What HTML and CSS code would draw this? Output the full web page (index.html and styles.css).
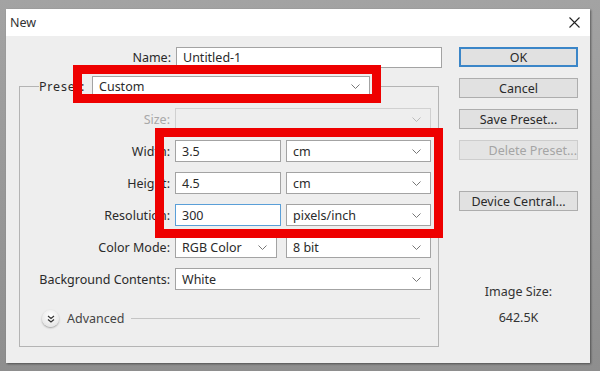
FILE: index.html
```html
<!DOCTYPE html>
<html lang="en">
<head>
  <meta charset="utf-8">
  <title>New</title>
  <link rel="stylesheet" href="styles.css">
</head>
<body>

  <div class="dialog">
    <div class="titlebar">
      <span>New</span>
      <svg class="close" width="11" height="11" viewBox="0 0 11 11"><path d="M0.5 0.5 L10.5 10.5 M10.5 0.5 L0.5 10.5" stroke="#222" stroke-width="1.1" fill="none"/></svg>
    </div>

    <div class="content">
      <div class="main">
        <div class="name-row">
          <label>Name:</label>
          <div class="field name-field">Untitled-1</div>
        </div>

        <fieldset class="group">
          <legend class="preset">
            <span class="preset-label">Preset:</span>
            <div class="field select preset-select">Custom <svg class="chev" width="9" height="5" viewBox="0 0 9 5"><path d="M0.5 0.5 L4.5 4.5 L8.5 0.5" stroke="#777" fill="none"/></svg></div>
          </legend>

          <div class="rows">
            <label class="off">Size:</label>
            <div class="field select wide disabled"><svg class="chev" width="9" height="5" viewBox="0 0 9 5"><path d="M0.5 0.5 L4.5 4.5 L8.5 0.5" stroke="#bbb" fill="none"/></svg></div>

            <label>Width:</label>
            <div class="field">3.5</div>
            <div class="field select">cm <svg class="chev" width="9" height="5" viewBox="0 0 9 5"><path d="M0.5 0.5 L4.5 4.5 L8.5 0.5" stroke="#777" fill="none"/></svg></div>

            <label>Height:</label>
            <div class="field">4.5</div>
            <div class="field select">cm <svg class="chev" width="9" height="5" viewBox="0 0 9 5"><path d="M0.5 0.5 L4.5 4.5 L8.5 0.5" stroke="#777" fill="none"/></svg></div>

            <label>Resolution:</label>
            <div class="field focus">300</div>
            <div class="field select">pixels/inch <svg class="chev" width="9" height="5" viewBox="0 0 9 5"><path d="M0.5 0.5 L4.5 4.5 L8.5 0.5" stroke="#777" fill="none"/></svg></div>

            <label>Color Mode:</label>
            <div class="field select narrow">RGB Color <svg class="chev" width="9" height="5" viewBox="0 0 9 5"><path d="M0.5 0.5 L4.5 4.5 L8.5 0.5" stroke="#777" fill="none"/></svg></div>
            <div class="field select">8 bit <svg class="chev" width="9" height="5" viewBox="0 0 9 5"><path d="M0.5 0.5 L4.5 4.5 L8.5 0.5" stroke="#777" fill="none"/></svg></div>

            <label>Background Contents:</label>
            <div class="field select wide">White <svg class="chev" width="9" height="5" viewBox="0 0 9 5"><path d="M0.5 0.5 L4.5 4.5 L8.5 0.5" stroke="#777" fill="none"/></svg></div>

            <div class="advanced">
              <span class="adv-icon"><svg width="8" height="8" viewBox="0 0 8 8"><path d="M1 1 L4 3.5 L7 1 M1 4.5 L4 7 L7 4.5" stroke="#333" stroke-width="1.2" fill="none"/></svg></span>
              <span>Advanced</span>
              <span class="adv-line"></span>
            </div>
          </div>
        </fieldset>
      </div>

      <div class="side">
        <div class="btn default">OK</div>
        <div class="btn">Cancel</div>
        <div class="btn">Save Preset...</div>
        <div class="btn disabled">Delete Preset...</div>
        <div class="btn gap">Device Central...</div>
        <p class="size-title">Image Size:</p>
        <p class="size-value">642.5K</p>
      </div>
    </div>

    <div class="mark mark-preset"></div>
    <div class="mark mark-size"></div>
  </div>

</body>
</html>
```

FILE: styles.css
```css
*, *::before, *::after {
  box-sizing: border-box;
}

body {
  margin: 0;
  padding: 9px 0 0 6px;
  min-height: 371px;
  background: linear-gradient(#a3a3a3, #8e8e8e);
  font-family: "Noto Sans", sans-serif;
  font-size: 12.5px;
  color: #2a2a2a;
}

.dialog {
  position: relative;
  width: 584px;
  height: 354px;
  background-color: #eeeeee;
  box-shadow: 1px 1px 2px rgb(0 0 0 / 0.45);
}

.titlebar {
  height: 27px;
  padding: 0 10px 0 4px;
  display: flex;
  align-items: center;
  justify-content: space-between;
  background-color: #fff;
  color: #333;
}

.content {
  display: flex;
  gap: 17px;
  padding: 11px 12px 0 13px;
}

.main {
  width: 423px;
}

.name-row {
  display: grid;
  grid-template-columns: 152px 266px;
  column-gap: 5px;
  align-items: center;
}

label {
  text-align: right;
  white-space: nowrap;
}

.off {
  color: #a8a8a8;
}

.field {
  height: 22px;
  padding: 0 6px;
  display: flex;
  align-items: center;
  background-color: #fff;
  border: 1px solid #a3a3a3;
  white-space: nowrap;
}

.name-field {
  height: 21px;
}

.select {
  justify-content: space-between;
}

.chev {
  margin-right: 3px;
}

.focus {
  border-color: #5a9fd8;
}

.disabled {
  background-color: #eeeeee;
  border-color: #d0d0d0;
  justify-content: flex-end;
}

.group {
  width: 420px;
  margin: 8px 0 0;
  padding: 11px 6px 19px 0;
  border: 1px solid #b4b4b4;
  min-inline-size: 0;
}

.preset {
  margin-left: 19px;
  padding: 0 2px 0 0;
  display: flex;
  align-items: center;
}

.preset-label {
  width: 53px;
  letter-spacing: 0.8px;
}

.preset-select {
  width: 278px;
  height: 21px;
}

.rows {
  display: grid;
  grid-template-columns: 150px 106px 145px;
  column-gap: 5px;
  row-gap: 10px;
  align-items: center;
}

.wide {
  grid-column: 2 / 4;
}

.narrow {
  width: 102px;
}

.advanced {
  grid-column: 1 / 4;
  margin: 10px 11px 0 22px;
  display: flex;
  align-items: center;
  gap: 8px;
  color: #444;
}

.adv-icon {
  width: 17px;
  height: 17px;
  border-radius: 50%;
  display: grid;
  place-items: center;
  background: radial-gradient(circle at 50% 35%, #ffffff, #dedede);
  box-shadow: 0 1px 2px rgb(0 0 0 / 0.35);
}

.adv-line {
  flex: 1;
  height: 1px;
  margin-left: -2px;
  background-color: #c4c4c4;
}

.side {
  width: 119px;
  display: flex;
  flex-direction: column;
  gap: 11px;
}

.btn {
  height: 20px;
  display: grid;
  place-items: center;
  background-color: #e1e1e1;
  border: 1px solid #adadad;
}

.btn.default {
  border: 2px solid #3b86c8;
}

.btn.disabled {
  color: #a5a5a5;
  background-color: #e4e4e4;
  border-color: #cdcdcd;
}

.btn.gap {
  margin-top: 20px;
}

.side p {
  margin: 0;
  text-align: center;
  color: #333;
}

.size-title {
  margin-top: 61px !important;
}

.size-value {
  margin-top: -2px !important;
}

.mark {
  position: absolute;
  border: 9px solid #ee0000;
}

.mark-preset {
  left: 67px;
  top: 56px;
  width: 308px;
  height: 38px;
}

.mark-size {
  left: 149px;
  top: 119px;
  width: 288px;
  height: 110px;
}
```
